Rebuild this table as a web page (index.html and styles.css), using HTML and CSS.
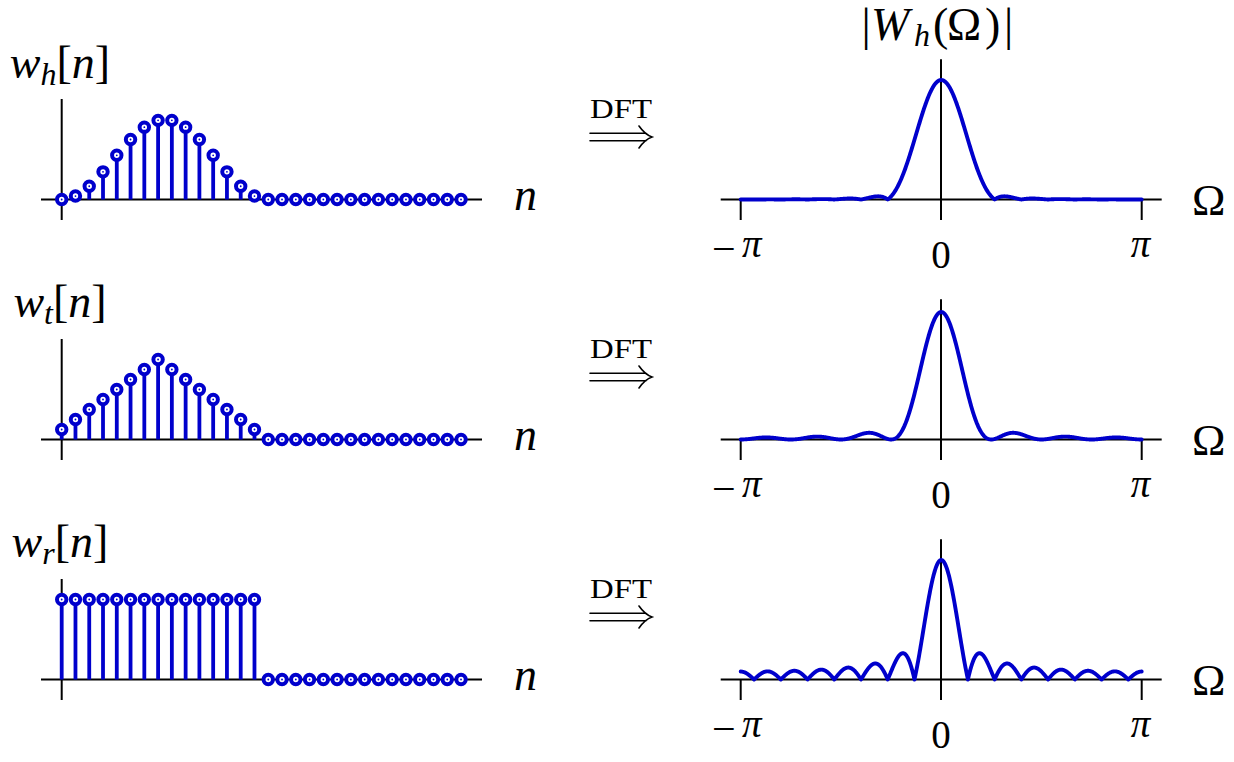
FILE: index.html
```html
<!DOCTYPE html>
<html lang="en">
<head>
<meta charset="utf-8">
<title>Windows and their spectra</title>
<link rel="stylesheet" href="styles.css">
</head>
<body>
<div class="figure">
  <div class="row">
    <svg class="signal" data-window="hann" viewBox="0 0 560 240">
      <text class="label" x="60" y="78"><tspan class="it">w</tspan><tspan class="it sub" dy="7">h</tspan><tspan dy="-7">[</tspan><tspan class="it">n</tspan>]</text>
      <line class="axis" x1="41" y1="199.5" x2="482" y2="199.5"/>
      <line class="axis" x1="61.7" y1="99" x2="61.7" y2="220"/>
      <g class="samples"></g>
      <text class="axis-label it" x="514" y="210">n</text>
    </svg>
    <svg class="transform" viewBox="0 0 140 240">
      <text class="dft" x="30" y="118" textLength="62" lengthAdjust="spacingAndGlyphs">DFT</text>
      <path class="arrow" d="M30 133.2 H86 M30 140.8 H86 M79 126 C82.5 131 86.5 135 92 137 C86.5 139 82.5 143 79 148"/>
    </svg>
    <svg class="spectrum" data-window="hann" data-peak="119.5" viewBox="0 0 534 240">
      <text class="title" y="40"><tspan x="161.5">|</tspan><tspan class="it" x="171">W</tspan><tspan class="it sub" x="214" dy="6">h</tspan><tspan x="233" dy="-6">(</tspan><tspan x="247">Ω</tspan><tspan x="285">)</tspan><tspan x="304">|</tspan></text>
      <line class="axis" x1="20.7" y1="199.5" x2="461.7" y2="199.5"/>
      <line class="axis" x1="241" y1="59.3" x2="241" y2="220"/>
      <line class="axis" x1="40.7" y1="199.5" x2="40.7" y2="220"/>
      <line class="axis" x1="441.7" y1="199.5" x2="441.7" y2="220"/>
      <path class="curve"/>
      <text class="tick" y="257"><tspan class="minus" x="12" dy="6">−</tspan><tspan class="it" x="42" dy="-6">π</tspan></text>
      <text class="tick mid" x="241" y="267.5">0</text>
      <text class="tick it mid" x="440.5" y="257">π</text>
      <text class="omega" x="492" y="215">Ω</text>
    </svg>
  </div>
  <div class="row">
    <svg class="signal" data-window="tri" viewBox="0 0 560 240">
      <text class="label" x="60" y="77"><tspan class="it">w</tspan><tspan class="it sub" dy="7">t</tspan><tspan dy="-7">[</tspan><tspan class="it">n</tspan>]</text>
      <line class="axis" x1="41" y1="199.5" x2="482" y2="199.5"/>
      <line class="axis" x1="61.7" y1="99" x2="61.7" y2="220"/>
      <g class="samples"></g>
      <text class="axis-label it" x="514" y="210">n</text>
    </svg>
    <svg class="transform" viewBox="0 0 140 240">
      <text class="dft" x="30" y="118" textLength="62" lengthAdjust="spacingAndGlyphs">DFT</text>
      <path class="arrow" d="M30 133.2 H86 M30 140.8 H86 M79 126 C82.5 131 86.5 135 92 137 C86.5 139 82.5 143 79 148"/>
    </svg>
    <svg class="spectrum" data-window="tri" data-peak="127.5" viewBox="0 0 534 240">
      <line class="axis" x1="20.7" y1="199.5" x2="461.7" y2="199.5"/>
      <line class="axis" x1="241" y1="59.3" x2="241" y2="220"/>
      <line class="axis" x1="40.7" y1="199.5" x2="40.7" y2="220"/>
      <line class="axis" x1="441.7" y1="199.5" x2="441.7" y2="220"/>
      <path class="curve"/>
      <text class="tick" y="257"><tspan class="minus" x="12" dy="6">−</tspan><tspan class="it" x="42" dy="-6">π</tspan></text>
      <text class="tick mid" x="241" y="267.5">0</text>
      <text class="tick it mid" x="440.5" y="257">π</text>
      <text class="omega" x="492" y="215">Ω</text>
    </svg>
  </div>
  <div class="row">
    <svg class="signal" data-window="rect" viewBox="0 0 560 240">
      <text class="label" x="60" y="77"><tspan class="it">w</tspan><tspan class="it sub" dy="7">r</tspan><tspan dy="-7">[</tspan><tspan class="it">n</tspan>]</text>
      <line class="axis" x1="41" y1="199.5" x2="482" y2="199.5"/>
      <line class="axis" x1="61.7" y1="99" x2="61.7" y2="220"/>
      <g class="samples"></g>
      <text class="axis-label it" x="514" y="210">n</text>
    </svg>
    <svg class="transform" viewBox="0 0 140 240">
      <text class="dft" x="30" y="118" textLength="62" lengthAdjust="spacingAndGlyphs">DFT</text>
      <path class="arrow" d="M30 133.2 H86 M30 140.8 H86 M79 126 C82.5 131 86.5 135 92 137 C86.5 139 82.5 143 79 148"/>
    </svg>
    <svg class="spectrum" data-window="rect" data-peak="119.5" viewBox="0 0 534 240">
      <line class="axis" x1="20.7" y1="199.5" x2="461.7" y2="199.5"/>
      <line class="axis" x1="241" y1="59.3" x2="241" y2="220"/>
      <line class="axis" x1="40.7" y1="199.5" x2="40.7" y2="220"/>
      <line class="axis" x1="441.7" y1="199.5" x2="441.7" y2="220"/>
      <path class="curve"/>
      <text class="tick" y="257"><tspan class="minus" x="12" dy="6">−</tspan><tspan class="it" x="42" dy="-6">π</tspan></text>
      <text class="tick mid" x="241" y="267.5">0</text>
      <text class="tick it mid" x="440.5" y="257">π</text>
      <text class="omega" x="492" y="215">Ω</text>
    </svg>
  </div>
</div>
<script src="script.js"></script>
</body>
</html>
```

FILE: styles.css
```css
html, body {
  margin: 0;
  padding: 0;
  background: #ffffff;
}

body {
  min-height: 762px;
}

.figure {
  display: flex;
  flex-direction: column;
  width: 1234px;
  padding-bottom: 42px;
}

.row {
  display: flex;
  height: 240px;
}

.row svg {
  display: block;
  flex: none;
  height: 240px;
  overflow: visible;
}

.signal { width: 560px; }
.transform { width: 140px; }
.spectrum { width: 534px; }

.axis {
  stroke: #000000;
  stroke-width: 2px;
}

.samples .stem {
  stroke: #0000cc;
  stroke-width: 3.8px;
}

.samples .marker {
  fill: #ffffff;
  stroke: #0000cc;
  stroke-width: 4px;
}

.samples .dot { fill: #0000cc; }

.curve {
  fill: none;
  stroke: #0000cc;
  stroke-width: 3.9px;
  stroke-linejoin: round;
  stroke-linecap: round;
}

.arrow {
  fill: none;
  stroke: #000000;
  stroke-width: 1.6px;
  stroke-linecap: round;
}

text {
  font-family: "Liberation Serif", "Times New Roman", serif;
  fill: #000000;
}

.it { font-style: italic; }

.label {
  font-size: 46px;
  text-anchor: middle;
}

.sub { font-size: 32px; }

.axis-label { font-size: 46px; }

.title { font-size: 46px; }

.title .sub { font-size: 32px; }

.dft { font-size: 27px; }

.tick { font-size: 39px; }

.tick .minus { font-size: 42px; }

.mid { text-anchor: middle; }

.omega { font-size: 45px; }
```

FILE: script.js
```js
(function () {
  var NS = "http://www.w3.org/2000/svg";

  var windows = {
    hann: function (n) {
      return n >= 0 && n <= 15 ? 0.5 * (1 - Math.cos(2 * Math.PI * n / 15)) : 0;
    },
    tri: function (n) {
      return n >= 0 && n <= 14 ? 1 - Math.abs(n - 7) / 8 : 0;
    },
    rect: function (n) {
      return n >= 0 && n <= 14 ? 1 : 0;
    }
  };

  function el(name, attrs, parent) {
    var node = document.createElementNS(NS, name);
    Object.keys(attrs).forEach(function (key) {
      node.setAttribute(key, String(attrs[key]));
    });
    parent.appendChild(node);
    return node;
  }

  var AXIS_Y = 199.5;

  document.querySelectorAll("svg.signal").forEach(function (svg) {
    var f = windows[svg.dataset.window];
    var g = svg.querySelector(".samples");
    var x0 = 61.7, dx = 13.77, amp = 80, k, x, v, y;
    for (k = 0; k < 30; k++) {
      x = (x0 + k * dx).toFixed(2);
      v = f(k);
      if (v > 0.001) {
        el("line", { "class": "stem", "stroke-width": "3.8", x1: x, y1: AXIS_Y, x2: x, y2: (AXIS_Y - amp * v).toFixed(2) }, g);
      }
    }
    for (k = 0; k < 30; k++) {
      x = (x0 + k * dx).toFixed(2);
      y = (AXIS_Y - amp * f(k)).toFixed(2);
      el("circle", { "class": "marker", "stroke-width": "4", cx: x, cy: y, r: "4.7" }, g);
      el("circle", { "class": "dot", cx: x, cy: y, r: "0.9" }, g);
    }
  });

  document.querySelectorAll("svg.spectrum").forEach(function (svg) {
    var f = windows[svg.dataset.window];
    var peak = parseFloat(svg.dataset.peak);
    var w = [];
    for (var n = 0; n < 16; n++) w.push(f(n));
    function mag(om) {
      var re = 0, im = 0;
      for (var n = 0; n < w.length; n++) {
        re += w[n] * Math.cos(om * n);
        im -= w[n] * Math.sin(om * n);
      }
      return Math.sqrt(re * re + im * im);
    }
    var m0 = mag(0);
    var cx = 241.2, s = 200.5 / Math.PI, steps = 900, d = "";
    for (var i = 0; i <= steps; i++) {
      var om = -Math.PI + 2 * Math.PI * i / steps;
      var x = cx + om * s;
      var y = AXIS_Y - peak * mag(om) / m0;
      d += (i ? "L" : "M") + x.toFixed(2) + " " + y.toFixed(2);
    }
    svg.querySelector(".curve").setAttribute("d", d);
  });
})();
```
